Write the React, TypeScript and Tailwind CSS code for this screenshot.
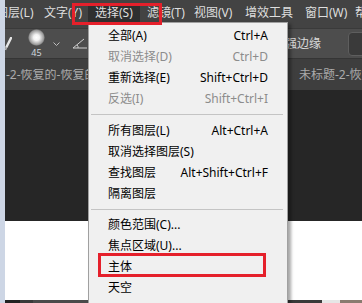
import React from 'react';

const font = { fontFamily: '"Noto Sans", "Noto Sans CJK SC", sans-serif' };

interface MenuItem {
  label: string;
  shortcut?: string;
  disabled?: boolean;
}

const topMenus = [
  { label: '图层(L)', w: 'w-[48px]' },
  { label: '文字(Y)', w: 'w-[51px]' },
  { label: '选择(S)', w: 'w-[52px]', active: true },
  { label: '滤镜(T)', w: 'w-[47px]' },
  { label: '视图(V)', w: 'w-[51px]' },
  { label: '增效工具', w: 'w-[60px]' },
  { label: '窗口(W)', w: 'w-[50px]' },
  { label: '帮助(H)', w: 'w-[50px]' },
];

const groups: MenuItem[][] = [
  [
    { label: '全部(A)', shortcut: 'Ctrl+A' },
    { label: '取消选择(D)', shortcut: 'Ctrl+D', disabled: true },
    { label: '重新选择(E)', shortcut: 'Shift+Ctrl+D' },
    { label: '反选(I)', shortcut: 'Shift+Ctrl+I', disabled: true },
  ],
  [
    { label: '所有图层(L)', shortcut: 'Alt+Ctrl+A' },
    { label: '取消选择图层(S)' },
    { label: '查找图层', shortcut: 'Alt+Shift+Ctrl+F' },
    { label: '隔离图层' },
  ],
  [
    { label: '颜色范围(C)...' },
    { label: '焦点区域(U)...' },
    { label: '主体' },
    { label: '天空' },
  ],
];

function OptionsBar() {
  return (
    <div className="flex h-[30px] items-center bg-[#4d4d4d] border-t border-[#3a3a3a]">
      <svg width="7" height="14" viewBox="0 0 7 14" className="shrink-0">
        <path d="M6 1 L1.5 10" stroke="#e6e6e6" strokeWidth="2.4" strokeLinecap="round" />
        <path d="M1.5 10 L0.5 13" stroke="#bdbdbd" strokeWidth="1.5" />
      </svg>
      <div className="ml-[6px] h-[24px] w-px bg-[#353535]" />
      <div className="ml-[10px] flex h-full w-[18px] flex-col items-center">
        <div className="h-[17px] w-[17px] rounded-full bg-[radial-gradient(circle,#ffffff_0%,#f2f2f2_25%,#9a9a9a_60%,rgba(77,77,77,0)_72%)]" />
        <span className="mt-[2px] text-[9px] leading-[10px] text-[#cfd6de]">45</span>
      </div>
      <svg width="7" height="4" viewBox="0 0 7 4" className="ml-[8px] mt-[1px] shrink-0">
        <path d="M0.5 0.5 L3.5 3.5 L6.5 0.5" fill="none" stroke="#bdbdbd" strokeWidth="1" />
      </svg>
      <div className="ml-[7px] h-[24px] w-px bg-[#353535]" />
      <svg width="15" height="11" viewBox="0 0 15 11" className="ml-[5px] shrink-0">
        <path d="M1 10 L12 1 M1 10 L15 10" fill="none" stroke="#d0d0d0" strokeWidth="1" />
        <path d="M5 7 Q6.5 8.5 6 10" fill="none" stroke="#d0d0d0" strokeWidth="1" />
      </svg>
      <span className="ml-[186px] shrink-0 text-[12px] leading-none text-[#dadada]">增强边缘</span>
      <div className="ml-[14px] h-[24px] w-px bg-[#353535]" />
      <div className="ml-[13px] h-[24px] w-[24px] shrink-0 rounded-[4px] border border-[#5e5e5e] bg-[#3a3a3a]" />
    </div>
  );
}

function SelectMenu() {
  return (
    <div className="absolute left-[88px] top-[22px] h-[300px] w-[200px] border border-[#a0a0a0] bg-[#f0f0f0] pt-[2px] text-[12px] shadow-[3px_2px_3px_rgba(0,0,0,0.35)]">
      {groups.map((g, gi) => (
        <div key={gi}>
          {gi > 0 && (
            <div className={`flex items-center ${gi === 1 ? 'h-[11px]' : 'h-[10px]'}`}>
              <div className="ml-[2px] mr-[4px] h-px flex-1 bg-[#c4c4c4]" />
            </div>
          )}
          {g.map((it) => (
            <div
              key={it.label}
              className={`flex h-[21px] items-center pl-[19px] pr-[19px] leading-none ${
                it.disabled ? 'text-[#8c8c8c]' : 'text-black'
              }`}
            >
              <span className="flex-1 whitespace-nowrap">{it.label}</span>
              {it.shortcut && <span className="whitespace-nowrap">{it.shortcut}</span>}
            </div>
          ))}
        </div>
      ))}
    </div>
  );
}

export default function App() {
  return (
    <div className="relative flex h-[303px] w-[362px] overflow-hidden bg-white" style={font}>
      <div className="w-[5px] shrink-0 bg-[#cdd6e5]" />
      <div className="flex min-w-0 flex-1 flex-col overflow-hidden">
        {/* menu bar */}
        <div className="flex h-[28px] shrink-0 bg-[#434343] pt-[4px]">
          <div className="-ml-[16px] flex">
            {topMenus.map((m) => (
              <div
                key={m.label}
                className={`flex h-[18px] shrink-0 items-center pl-[7px] text-[12px] leading-none text-[#dedede] ${m.w} ${
                  m.active ? 'bg-[#2f2f2f]' : ''
                }`}
              >
                <span className="whitespace-nowrap">{m.label}</span>
              </div>
            ))}
          </div>
        </div>
        <OptionsBar />
        {/* document tabs */}
        <div className="flex h-[32px] shrink-0 items-center border-t border-[#353535] bg-[#3e3e3e] text-[12px] leading-none text-[#ababab]">
          <div className="w-[83px] shrink-0 overflow-hidden whitespace-nowrap pl-[1px]">-2-恢复的-恢复的</div>
          <div className="w-[211px] shrink-0" />
          <div className="whitespace-nowrap">未标题-2-恢复的</div>
        </div>
        <div className="h-[131px] shrink-0 bg-[#262626]" />
        <div className="h-[79px] shrink-0 bg-white" />
        <div className="flex h-[3px] shrink-0">
          <div className="w-[15px] bg-[#222222]" />
          <div className="w-[13px] bg-[#3a3a3a]" />
          <div className="w-[255px] bg-[#4a4a4a]" />
          <div className="w-[34px] bg-[#3a3a3a]" />
          <div className="w-[18px] bg-[#e6e6e6]" />
          <div className="flex-1 bg-[#8a7b70]" />
        </div>
      </div>

      <SelectMenu />

      {/* highlight boxes */}
      <div className="pointer-events-none absolute left-[72px] top-[3px] h-[22px] w-[90px] border-[3px] border-[#e5202b]" />
      <div className="pointer-events-none absolute left-[98px] top-[253px] h-[24px] w-[168px] border-[3px] border-[#e5202b]" />
    </div>
  );
}
